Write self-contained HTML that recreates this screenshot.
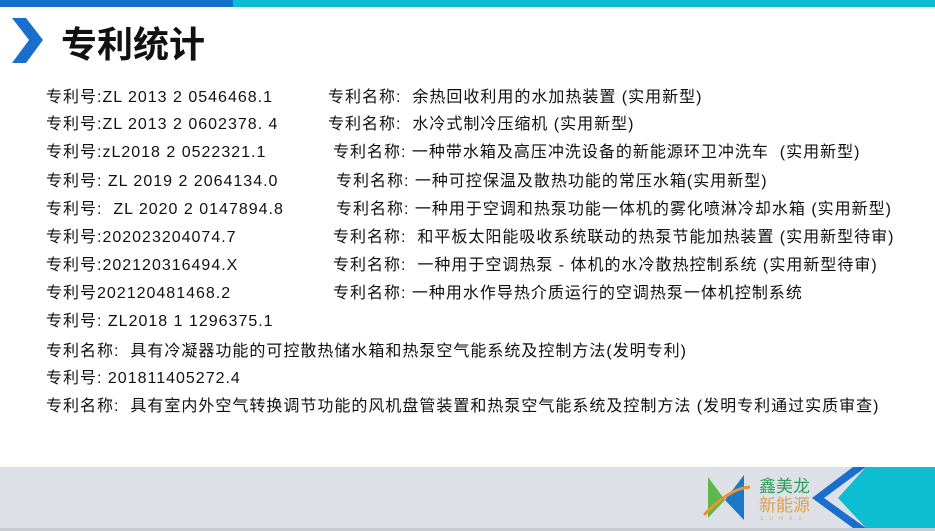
<!DOCTYPE html>
<html><head><meta charset="utf-8"><style>
body{margin:0;width:935px;height:531px;overflow:hidden;background:#fff;position:relative;font-family:"Liberation Sans","Noto Sans CJK SC",sans-serif;color:#111}
.l,.c{position:absolute;font-size:16px;line-height:20px;white-space:nowrap;letter-spacing:1px;margin-top:2px}
.l{left:46px}
</style></head><body>
<div style="position:absolute;left:0;top:0;width:233px;height:7px;background:#1471c9"></div>
<div style="position:absolute;left:233px;top:0;width:702px;height:7px;background:#0cbcd0"></div>
<svg style="position:absolute;left:0;top:0" width="60" height="70"><polygon points="12,18 26,18 43,40 26,63 12,63 29,40" fill="#1a6fcc"/></svg>
<div style="position:absolute;left:61px;top:20px;font-size:36px;font-weight:bold;line-height:44px;font-family:'Noto Sans CJK SC',sans-serif">专利统计</div>

<div class="l" style="top:86px">专利号:ZL 2013 2 0546468.1</div><div class="c" style="left:328px;top:86px">专利名称:&nbsp; 余热回收利用的水加热装置 (实用新型)</div>
<div class="l" style="top:113px">专利号:ZL 2013 2 0602378. 4</div><div class="c" style="left:328px;top:113px">专利名称:&nbsp; 水冷式制冷压缩机 (实用新型)</div>
<div class="l" style="top:141px">专利号:zL2018 2 0522321.1</div><div class="c" style="left:333px;top:141px">专利名称: 一种带水箱及高压冲洗设备的新能源环卫冲洗车 &nbsp;(实用新型)</div>
<div class="l" style="top:170px">专利号: ZL 2019 2 2064134.0</div><div class="c" style="left:336px;top:170px">专利名称: 一种可控保温及散热功能的常压水箱(实用新型)</div>
<div class="l" style="top:198px">专利号:&nbsp; ZL 2020 2 0147894.8</div><div class="c" style="left:336px;top:198px">专利名称: 一种用于空调和热泵功能一体机的雾化喷淋冷却水箱 (实用新型)</div>
<div class="l" style="top:226px">专利号:202023204074.7</div><div class="c" style="left:333px;top:226px">专利名称:&nbsp; 和平板太阳能吸收系统联动的热泵节能加热装置 (实用新型待审)</div>
<div class="l" style="top:254px">专利号:202120316494.X</div><div class="c" style="left:333px;top:254px">专利名称:&nbsp; 一种用于空调热泵 - 体机的水冷散热控制系统 (实用新型待审)</div>
<div class="l" style="top:282px">专利号202120481468.2</div><div class="c" style="left:333px;top:282px">专利名称: 一种用水作导热介质运行的空调热泵一体机控制系统</div>
<div class="l" style="top:310px">专利号: ZL2018 1 1296375.1</div>
<div class="l" style="top:340px">专利名称:&nbsp; 具有冷凝器功能的可控散热储水箱和热泵空气能系统及控制方法(发明专利)</div>
<div class="l" style="top:367px">专利号: 201811405272.4</div>
<div class="l" style="top:395px">专利名称:&nbsp; 具有室内外空气转换调节功能的风机盘管装置和热泵空气能系统及控制方法 (发明专利通过实质审查)</div>

<div style="position:absolute;left:0;top:467px;width:935px;height:61px;background:#dde0e6"></div>
<div style="position:absolute;left:0;top:528px;width:935px;height:3px;background:#c8ccd2"></div>
<svg style="position:absolute;left:680px;top:450px" width="255" height="81">
<polygon points="28,27 45,50 28,68" fill="#5cb84a"/>
<polygon points="64,25 64,70 45,50" fill="#1a78c6"/>
<path d="M24,65 Q50,38 70,37" stroke="#f0902a" stroke-width="3" fill="none"/>
<polygon points="173,17 186,17 144,48 186,78 173,78 132,48" fill="#1a6fcc"/>
<polygon points="186,17 255,17 255,78 186,78 158,48" fill="#0cbcd0"/>
<text x="79" y="42" font-size="17" fill="#2e9e5a" font-family="Noto Sans CJK SC,sans-serif">鑫美龙</text>
<text x="79" y="61" font-size="17" fill="#e0a050" font-family="Noto Sans CJK SC,sans-serif">新能源</text>
<text x="80" y="70" font-size="5" fill="#d8b080" letter-spacing="6">SUMAX</text>
</svg>
</body></html>
